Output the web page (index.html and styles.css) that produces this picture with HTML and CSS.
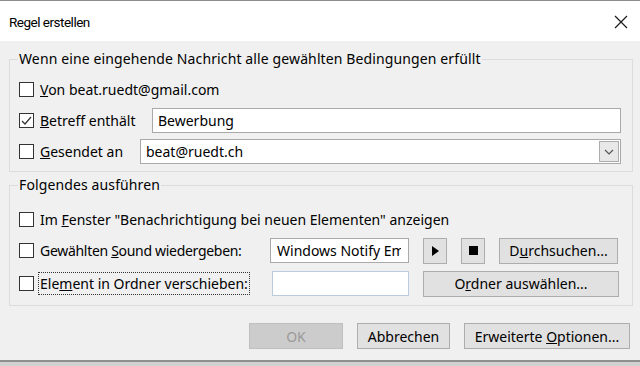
FILE: index.html
```html
<!DOCTYPE html>
<html lang="de">
<head>
  <meta charset="UTF-8" />
  <title>Regel erstellen</title>
  <link rel="stylesheet" href="styles.css">
</head>
<body>
  <div class="window">
    <div class="titlebar">
      <span class="title">Regel erstellen</span>
      <svg class="close" width="14" height="14" viewBox="0 0 14 14">
        <path d="M1 1L13 13M13 1L1 13" stroke="#1a1a1a" stroke-width="1.2" fill="none"/>
      </svg>
    </div>

    <div class="content">
      <fieldset class="group group-cond">
        <legend>Wenn eine eingehende Nachricht alle gewählten Bedingungen erfüllt</legend>
        <div class="row">
          <label class="check"><span class="box"></span><span><u>V</u>on beat.ruedt@gmail.com</span></label>
        </div>
        <div class="row">
          <label class="check label-subject">
            <span class="box">
              <svg width="13" height="13" viewBox="0 0 13 13"><path d="M2 7L5 10L11 3" stroke="#333" stroke-width="1.2" fill="none"/></svg>
            </span><span><u>B</u>etreff enthält</span>
          </label>
          <input class="field" type="text" value="Bewerbung">
        </div>
        <div class="row">
          <label class="check label-to"><span class="box"></span><span><u>G</u>esendet an</span></label>
          <div class="combo">
            <span class="combo-text">beat@ruedt.ch</span>
            <span class="combo-btn">
              <svg width="10" height="6" viewBox="0 0 10 6"><path d="M1 1L5 5L9 1" stroke="#555" stroke-width="1.2" fill="none"/></svg>
            </span>
          </div>
        </div>
      </fieldset>

      <fieldset class="group group-action">
        <legend>Folgendes ausführen</legend>
        <div class="row">
          <label class="check"><span class="box"></span><span>Im <u>F</u>enster "Benachrichtigung bei neuen Elementen" anzeigen</span></label>
        </div>
        <div class="row">
          <label class="check label-sound"><span class="box"></span><span>Gewählten <u>S</u>ound wiedergeben:</span></label>
          <input class="field field-sound" type="text" value="Windows Notify Email">
          <button class="btn btn-icon">
            <svg width="7" height="10" viewBox="0 0 7 10"><path d="M0 0L7 5L0 10Z" fill="#000"/></svg>
          </button>
          <button class="btn btn-icon">
            <svg width="9" height="9" viewBox="0 0 9 9"><rect width="9" height="9" fill="#000"/></svg>
          </button>
          <button class="btn btn-browse">D<u>u</u>rchsuchen...</button>
        </div>
        <div class="row">
          <label class="check label-move"><span class="box"></span><span class="focus">Ele<u>m</u>ent in Ordner verschieben:</span></label>
          <input class="field field-folder" type="text" value="">
          <button class="btn btn-folder">O<u>r</u>dner auswählen...</button>
        </div>
      </fieldset>
    </div>

    <div class="footer">
      <button class="btn btn-ok" disabled>OK</button>
      <button class="btn btn-cancel">Abbrechen</button>
      <button class="btn btn-more">Erweiterte <u>O</u>ptionen...</button>
    </div>
  </div>
</body>
</html>
```

FILE: styles.css
```css
body {
  margin: 0;
  background: #d0d0d0;
  font-family: "Noto Sans", sans-serif;
  font-size: 14px;
  color: #000;
}
.window {
  height: 362px;
  box-sizing: border-box;
  background: #f0f0f0;
  border-top: 1px solid #8c8c8c;
  border-bottom: 2px solid #8f8f8f;
  display: flex;
  flex-direction: column;
}
.titlebar {
  height: 39px;
  background: #fff;
  display: flex;
  align-items: center;
  justify-content: space-between;
  padding: 1px 12px 0 9px;
}
.title {
  font-family: "Roboto", sans-serif;
  font-size: 13.5px;
  letter-spacing: -0.5px;
}
.close {
  margin-top: 1px;
}
.content {
  padding: 9px 7px 0 9px;
}
.group {
  margin: 0;
  border: 1px solid #dcdcdc;
  padding: 9px 11px 7px 9px;
  min-width: 0;
}
.group legend {
  padding: 0 1px;
  margin-left: -1px;
  line-height: 18px;
  letter-spacing: 0.12px;
}
.group-action {
  margin-top: 4px;
  padding-top: 13px;
  padding-bottom: 9px;
}
.row {
  display: flex;
  align-items: center;
  height: 25px;
  margin-bottom: 6px;
}
.row:last-child {
  margin-bottom: 0;
}
.group-action .row:nth-child(3) {
  margin-bottom: 8px;
}
.check {
  display: flex;
  align-items: center;
  white-space: nowrap;
}
.box {
  width: 13px;
  height: 13px;
  border: 1px solid #333;
  background: #fff;
  margin-right: 6px;
  display: flex;
}
.label-subject { width: 133px; }
.label-to { width: 121px; }
.label-sound { width: 251px; }
.label-move { width: 253px; }
.label-sound span:last-child {
  letter-spacing: -0.3px;
}
.focus {
  outline: 1px dotted #333;
  outline-offset: 1px;
}
.field {
  box-sizing: border-box;
  height: 25px;
  border: 1px solid #a9a9a9;
  background: #fff;
  font: inherit;
  padding: 0 5px;
  outline: none;
}
.label-subject + .field {
  flex: 1;
}
.field-sound {
  width: 139px;
  padding: 0 7px 0 6px;
}
.field-folder {
  width: 137px;
  border-color: #bccbdc;
}
.combo {
  flex: 1;
  height: 25px;
  box-sizing: border-box;
  border: 1px solid #a9a9a9;
  background: #fff;
  display: flex;
  align-items: center;
  justify-content: space-between;
  padding: 0 1px 0 5px;
}
.combo-btn {
  width: 20px;
  height: 21px;
  box-sizing: border-box;
  border: 1px solid #acacac;
  background: #e8e8e8;
  display: flex;
  align-items: center;
  justify-content: center;
}
.btn {
  box-sizing: border-box;
  height: 26px;
  border: 1px solid #adadad;
  background: #e1e1e1;
  font: inherit;
  color: #000;
  padding: 0;
  margin-left: 14px;
}
.btn-icon {
  width: 24px;
  display: flex;
  align-items: center;
  justify-content: center;
}
.btn-browse {
  width: 119px;
}
.btn-folder {
  width: 196px;
}
.footer {
  display: flex;
  justify-content: flex-end;
  padding: 17px 10px 0 0;
}
.btn-ok {
  width: 94px;
  background: #cccccc;
  border-color: #bfbfbf;
  color: #9a9a9a;
}
.btn-cancel {
  width: 93px;
}
.btn-more {
  width: 166px;
}
```
